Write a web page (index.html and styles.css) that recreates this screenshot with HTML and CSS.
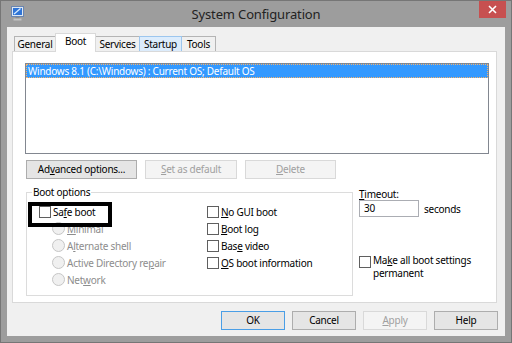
FILE: index.html
```html
<!DOCTYPE html>
<html>
<head>
<meta charset="utf-8">
<link rel="stylesheet" href="styles.css">
</head>
<body>
<div class="window">
  <div class="titlebar">
    <div class="tb-left">
      <svg class="app-icon" width="13" height="15" viewBox="0 0 13 15">
        <rect x="0.5" y="0.5" width="12" height="10" fill="#dfe8f2" stroke="#6b86b0"/>
        <rect x="2" y="2" width="9" height="7" fill="#2f74d6"/>
        <path d="M3 8 L9.5 2.5" stroke="#d6ebff" stroke-width="1.3"/>
        <rect x="4.5" y="11" width="4" height="1.5" fill="#8a8a8a"/>
        <rect x="2.5" y="12.5" width="8" height="2" fill="#c4c4c4"/>
      </svg>
    </div>
    <div class="title">System Configuration</div>
    <div class="tb-right">
      <div class="close">
        <svg width="9" height="9" viewBox="0 0 9 9"><path d="M1 1 L8 8 M8 1 L1 8" stroke="#fff" stroke-width="1.6"/></svg>
      </div>
    </div>
  </div>
  <div class="client">
    <div class="tabs">
      <div class="tab t-general">General</div>
      <div class="tab t-boot selected">Boot</div>
      <div class="tab t-services">Services</div>
      <div class="tab t-startup hover">Startup</div>
      <div class="tab t-tools">Tools</div>
    </div>
    <div class="panel">
      <div class="listbox">
        <div class="item">Windows 8.1 (C:\Windows) : Current OS; Default OS</div>
      </div>
      <div class="btnrow">
        <button class="btn b-adv">Ad<u>v</u>anced options...</button>
        <button class="btn b-def" disabled><u>S</u>et as default</button>
        <button class="btn b-del" disabled><u>D</u>elete</button>
      </div>
      <div class="lower">
        <div class="group">
          <div class="legend">Boot options</div>
          <div class="opts">
            <div class="col col-left">
              <div class="opt first"><span class="cb"></span><span>Sa<u>f</u>e boot</span><span class="mark"></span></div>
              <div class="opt sub dis"><span class="rb"></span><span><u>M</u>inimal</span></div>
              <div class="opt sub dis"><span class="rb"></span><span>A<u>l</u>ternate shell</span></div>
              <div class="opt sub dis"><span class="rb"></span><span>Active Directory re<u>p</u>air</span></div>
              <div class="opt sub dis"><span class="rb"></span><span>Net<u>w</u>ork</span></div>
            </div>
            <div class="col col-right">
              <div class="opt"><span class="cb"></span><span><u>N</u>o GUI boot</span></div>
              <div class="opt"><span class="cb"></span><span><u>B</u>oot log</span></div>
              <div class="opt"><span class="cb"></span><span>Bas<u>e</u> video</span></div>
              <div class="opt"><span class="cb"></span><span><u>O</u>S boot information</span></div>
            </div>
          </div>
        </div>
        <div class="side">
          <div class="side-label"><u>T</u>imeout:</div>
          <div class="timeout-row">
            <div class="textbox">30</div>
            <span class="unit">seconds</span>
          </div>
          <div class="perm-row">
            <span class="cb"></span>
            <div class="perm-label">
              <div class="perm-line">Ma<u>k</u>e all boot settings</div>
              <div class="perm-line">permanent</div>
            </div>
          </div>
        </div>
      </div>
    </div>
    <div class="footer">
      <button class="btn fbtn default">OK</button>
      <button class="btn fbtn">Cancel</button>
      <button class="btn fbtn" disabled><u>A</u>pply</button>
      <button class="btn fbtn">Help</button>
    </div>
  </div>
</div>
</body>
</html>
```
FILE: styles.css
```css
* { box-sizing: border-box; }
html, body { margin: 0; padding: 0; }
body { width: 512px; height: 343px; overflow: hidden; }

.window {
  width: 512px;
  height: 343px;
  background: #9d9d9d;
  border: 1px solid #767676;
  padding: 0 6px 6px 6px;
  display: flex;
  flex-direction: column;
  font-family: "Noto Sans", "Open Sans", sans-serif;
  font-size: 10px;
  letter-spacing: -0.25px;
  color: #000;
}

.titlebar {
  height: 26px;
  display: grid;
  grid-template-columns: 1fr auto 1fr;
  align-items: start;
}
.app-icon { display: block; margin: 5px 0 0 4px; }
.title {
  font-size: 13px;
  letter-spacing: -0.15px;
  line-height: 26px;
  color: #222;
}
.tb-right { display: flex; justify-content: flex-end; }
.close {
  width: 27px;
  height: 17px;
  margin-right: -1px;
  background: #c75050;
  display: flex;
  align-items: center;
  justify-content: center;
}
.close svg { display: block; }

.client {
  flex: 1;
  background: #f0f0f0;
  padding: 6px 8px 0 5px;
  display: flex;
  flex-direction: column;
}

.tabs {
  height: 18px;
  display: flex;
  align-items: flex-end;
  padding-left: 2px;
}
.tab {
  height: 15px;
  border: 1px solid #b4b4b4;
  border-bottom: none;
  background: #f0f0f0;
  line-height: 14px;
  text-align: center;
  margin-left: -1px;
}
.tab:first-child { margin-left: 0; }
.t-general { width: 42px; }
.t-boot { width: 41px; }
.t-services { width: 45px; }
.t-startup { width: 43px; }
.t-tools { width: 35px; }
.tab.selected {
  height: 19px;
  margin-bottom: -1px;
  background: #fff;
  border-color: #d9d9d9;
  position: relative;
  z-index: 1;
  line-height: 15px;
}
.tab.hover {
  background: #dcecfc;
  border-color: #9cc6ee;
  position: relative;
}

.panel {
  height: 252px;
  border: 1px solid #d9d9d9;
  background: #fff;
  padding: 11px 0 0 12px;
}

.listbox {
  width: 464px;
  height: 91px;
  border: 1px solid #828790;
  background: #fff;
}
.item {
  height: 14px;
  background: #3399ff;
  color: #fff;
  border: 1px dotted #f5b26c;
  padding-left: 1px;
  line-height: 12px;
  white-space: nowrap;
}

.btnrow {
  display: flex;
  gap: 8px;
  margin: 6px 0 0 1px;
}
.btn {
  height: 19px;
  border: 1px solid #adadad;
  background: #e5e5e5;
  font-family: inherit;
  font-size: 10px;
  letter-spacing: -0.25px;
  color: #000;
  padding: 0;
  line-height: 15px;
}
.btn:disabled {
  background: #f4f4f4;
  border-color: #d9d9d9;
  color: #a0a0a0;
}
.b-adv { width: 111px; }
.b-def { width: 92px; }
.b-del { width: 91px; }

.lower {
  display: flex;
  align-items: flex-start;
  margin-top: 13px;
}
.group {
  width: 327px;
  height: 104px;
  margin-left: 1px;
  border: 1px solid #dcdcdc;
}
.legend {
  width: fit-content;
  margin: -7px 0 0 5px;
  padding: 0 1px;
  background: #fff;
  line-height: 13px;
}
.opts {
  display: flex;
  margin-top: 4px;
  padding-left: 12px;
}
.col-left { width: 168px; }
.opt {
  height: 17px;
  display: flex;
  align-items: center;
  white-space: nowrap;
}
.opt.first { position: relative; }
.opt.sub { padding-left: 13px; }
.opt.dis { color: #8d8d8d; }
.cb {
  width: 12px;
  height: 12px;
  border: 1px solid #5f5f5f;
  background: #fff;
  margin-right: 2px;
  flex: none;
}
.rb {
  width: 13px;
  height: 13px;
  border-radius: 50%;
  border: 1px solid #c6c6c6;
  background: #f0f0f0;
  margin-right: 2px;
  flex: none;
}
.mark {
  position: absolute;
  left: -11px;
  top: -1px;
  width: 84px;
  height: 25px;
  border: 4px solid #000;
}

.side {
  margin: -4px 0 0 6px;
}
.side-label { line-height: 12px; }
.timeout-row {
  display: flex;
  align-items: center;
}
.textbox {
  width: 60px;
  height: 17px;
  border: 1px solid #abadb3;
  background: #fff;
  padding-left: 4px;
  line-height: 15px;
}
.unit { margin-left: 5px; }
.perm-row {
  display: flex;
  align-items: flex-start;
  margin-top: 38px;
}
.perm-row .cb { margin-top: 1px; }
.perm-label { margin-top: -1px; }
.perm-line { line-height: 13px; white-space: nowrap; }

.footer {
  display: flex;
  justify-content: flex-end;
  gap: 7px;
  margin: 8px -1px 0 0;
}
.fbtn { width: 64px; }
.fbtn.default { border-color: #4a9ee6; }
```
